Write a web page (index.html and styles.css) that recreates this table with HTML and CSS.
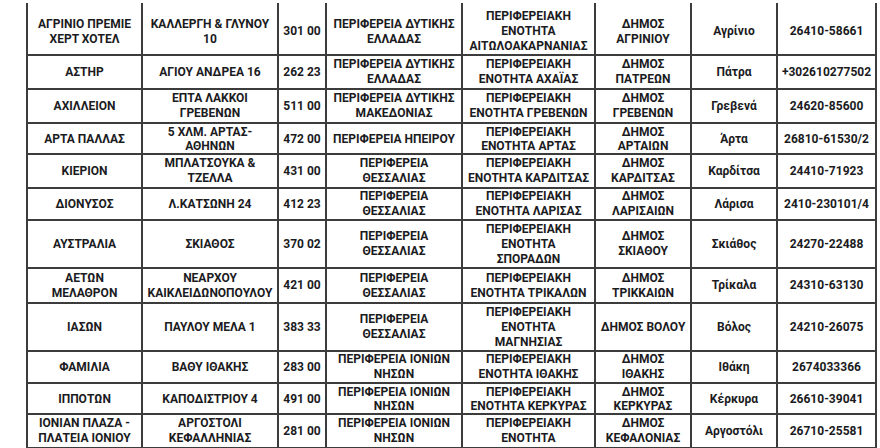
FILE: index.html
```html
<!DOCTYPE html>
<html lang="el">
<head>
<meta charset="utf-8">
<title>Ξενοδοχεία</title>
<link rel="stylesheet" href="styles.css">
</head>
<body>
<div class="sheet">
<table class="hotels">
<colgroup>
<col class="c-name"><col class="c-addr"><col class="c-zip"><col class="c-region"><col class="c-unit"><col class="c-muni"><col class="c-city"><col class="c-phone">
</colgroup>
<tbody>
<tr class="r-first">
<td>ΑΓΡΙΝΙΟ ΠΡΕΜΙΕ<br>ΧΕΡΤ ΧΟΤΕΛ</td><td>ΚΑΛΛΕΡΓΗ &amp; ΓΛΥΝΟΥ<br>10</td><td>301 00</td><td>ΠΕΡΙΦΕΡΕΙΑ ΔΥΤΙΚΗΣ<br>ΕΛΛΑΔΑΣ</td><td>ΠΕΡΙΦΕΡΕΙΑΚΗ<br>ΕΝΟΤΗΤΑ<br>ΑΙΤΩΛΟΑΚΑΡΝΑΝΙΑΣ</td><td>ΔΗΜΟΣ<br>ΑΓΡΙΝΙΟΥ</td><td>Αγρίνιο</td><td>26410-58661</td>
</tr>
<tr class="r34">
<td>ΑΣΤΗΡ</td><td>ΑΓΙΟΥ ΑΝΔΡΕΑ 16</td><td>262 23</td><td>ΠΕΡΙΦΕΡΕΙΑ ΔΥΤΙΚΗΣ<br>ΕΛΛΑΔΑΣ</td><td>ΠΕΡΙΦΕΡΕΙΑΚΗ<br>ΕΝΟΤΗΤΑ ΑΧΑΪΑΣ</td><td>ΔΗΜΟΣ<br>ΠΑΤΡΕΩΝ</td><td>Πάτρα</td><td>+302610277502</td>
</tr>
<tr class="r34">
<td>ΑΧΙΛΛΕΙΟΝ</td><td>ΕΠΤΑ ΛΑΚΚΟΙ<br>ΓΡΕΒΕΝΩΝ</td><td>511 00</td><td>ΠΕΡΙΦΕΡΕΙΑ ΔΥΤΙΚΗΣ<br>ΜΑΚΕΔΟΝΙΑΣ</td><td>ΠΕΡΙΦΕΡΕΙΑΚΗ<br>ΕΝΟΤΗΤΑ ΓΡΕΒΕΝΩΝ</td><td>ΔΗΜΟΣ<br>ΓΡΕΒΕΝΩΝ</td><td>Γρεβενά</td><td>24620-85600</td>
</tr>
<tr class="r31">
<td>ΑΡΤΑ ΠΑΛΛΑΣ</td><td>5 ΧΛΜ. ΑΡΤΑΣ-<br>ΑΘΗΝΩΝ</td><td>472 00</td><td>ΠΕΡΙΦΕΡΕΙΑ ΗΠΕΙΡΟΥ</td><td>ΠΕΡΙΦΕΡΕΙΑΚΗ<br>ΕΝΟΤΗΤΑ ΑΡΤΑΣ</td><td>ΔΗΜΟΣ<br>ΑΡΤΑΙΩΝ</td><td>Άρτα</td><td>26810-61530/2</td>
</tr>
<tr class="r34">
<td>ΚΙΕΡΙΟΝ</td><td>ΜΠΛΑΤΣΟΥΚΑ &amp;<br>ΤΖΕΛΛΑ</td><td>431 00</td><td>ΠΕΡΙΦΕΡΕΙΑ<br>ΘΕΣΣΑΛΙΑΣ</td><td>ΠΕΡΙΦΕΡΕΙΑΚΗ<br>ΕΝΟΤΗΤΑ ΚΑΡΔΙΤΣΑΣ</td><td>ΔΗΜΟΣ<br>ΚΑΡΔΙΤΣΑΣ</td><td>Καρδίτσα</td><td>24410-71923</td>
</tr>
<tr class="r32">
<td>ΔΙΟΝΥΣΟΣ</td><td>Λ.ΚΑΤΣΩΝΗ 24</td><td>412 23</td><td>ΠΕΡΙΦΕΡΕΙΑ<br>ΘΕΣΣΑΛΙΑΣ</td><td>ΠΕΡΙΦΕΡΕΙΑΚΗ<br>ΕΝΟΤΗΤΑ ΛΑΡΙΣΑΣ</td><td>ΔΗΜΟΣ<br>ΛΑΡΙΣΑΙΩΝ</td><td>Λάρισα</td><td>2410-230101/4</td>
</tr>
<tr class="r48">
<td>ΑΥΣΤΡΑΛΙΑ</td><td>ΣΚΙΑΘΟΣ</td><td>370 02</td><td>ΠΕΡΙΦΕΡΕΙΑ<br>ΘΕΣΣΑΛΙΑΣ</td><td>ΠΕΡΙΦΕΡΕΙΑΚΗ<br>ΕΝΟΤΗΤΑ<br>ΣΠΟΡΑΔΩΝ</td><td>ΔΗΜΟΣ<br>ΣΚΙΑΘΟΥ</td><td>Σκιάθος</td><td>24270-22488</td>
</tr>
<tr class="r35">
<td>ΑΕΤΩΝ<br>ΜΕΛΑΘΡΟΝ</td><td>ΝΕΑΡΧΟΥ<br>ΚΑΙΚΛΕΙΔΩΝΟΠΟΥΛΟΥ</td><td>421 00</td><td>ΠΕΡΙΦΕΡΕΙΑ<br>ΘΕΣΣΑΛΙΑΣ</td><td>ΠΕΡΙΦΕΡΕΙΑΚΗ<br>ΕΝΟΤΗΤΑ ΤΡΙΚΑΛΩΝ</td><td>ΔΗΜΟΣ<br>ΤΡΙΚΚΑΙΩΝ</td><td>Τρίκαλα</td><td>24310-63130</td>
</tr>
<tr class="r48">
<td>ΙΑΣΩΝ</td><td>ΠΑΥΛΟΥ ΜΕΛΑ 1</td><td>383 33</td><td>ΠΕΡΙΦΕΡΕΙΑ<br>ΘΕΣΣΑΛΙΑΣ</td><td>ΠΕΡΙΦΕΡΕΙΑΚΗ<br>ΕΝΟΤΗΤΑ<br>ΜΑΓΝΗΣΙΑΣ</td><td>ΔΗΜΟΣ ΒΟΛΟΥ</td><td>Βόλος</td><td>24210-26075</td>
</tr>
<tr class="r32">
<td>ΦΑΜΙΛΙΑ</td><td>ΒΑΘΥ ΙΘΑΚΗΣ</td><td>283 00</td><td>ΠΕΡΙΦΕΡΕΙΑ ΙΟΝΙΩΝ<br>ΝΗΣΩΝ</td><td>ΠΕΡΙΦΕΡΕΙΑΚΗ<br>ΕΝΟΤΗΤΑ ΙΘΑΚΗΣ</td><td>ΔΗΜΟΣ<br>ΙΘΑΚΗΣ</td><td>Ιθάκη</td><td>2674033366</td>
</tr>
<tr class="r31">
<td>ΙΠΠΟΤΩΝ</td><td>ΚΑΠΟΔΙΣΤΡΙΟΥ 4</td><td>491 00</td><td>ΠΕΡΙΦΕΡΕΙΑ ΙΟΝΙΩΝ<br>ΝΗΣΩΝ</td><td>ΠΕΡΙΦΕΡΕΙΑΚΗ<br>ΕΝΟΤΗΤΑ ΚΕΡΚΥΡΑΣ</td><td>ΔΗΜΟΣ<br>ΚΕΡΚΥΡΑΣ</td><td>Κέρκυρα</td><td>26610-39041</td>
</tr>
<tr class="r34">
<td>ΙΟΝΙΑΝ ΠΛΑΖΑ -<br>ΠΛΑΤΕΙΑ ΙΟΝΙΟΥ</td><td>ΑΡΓΟΣΤΟΛΙ<br>ΚΕΦΑΛΛΗΝΙΑΣ</td><td>281 00</td><td>ΠΕΡΙΦΕΡΕΙΑ ΙΟΝΙΩΝ<br>ΝΗΣΩΝ</td><td>ΠΕΡΙΦΕΡΕΙΑΚΗ<br>ΕΝΟΤΗΤΑ</td><td>ΔΗΜΟΣ<br>ΚΕΦΑΛΟΝΙΑΣ</td><td>Αργοστόλι</td><td>26710-25581</td>
</tr>
</tbody>
</table>
</div>
</body>
</html>
```

FILE: styles.css
```css
html, body {
  margin: 0;
  padding: 0;
  background: #ffffff;
}

.sheet {
  padding: 3px 0 0 26px;
}

.hotels {
  border-collapse: collapse;
  table-layout: fixed;
  width: 851px;
  font-family: Roboto, "Noto Sans", sans-serif;
  font-weight: 700;
  font-size: 12px;
  line-height: 15px;
  color: #1b1b22;
}

.c-name { width: 115px; }
.c-addr { width: 136px; }
.c-zip { width: 48px; }
.c-region { width: 136px; }
.c-unit { width: 133px; }
.c-muni { width: 96px; }
.c-city { width: 86px; }
.c-phone { width: 99px; }

.hotels td {
  border: 2px solid #3c3c3c;
  padding: 0;
  text-align: center;
  vertical-align: middle;
  white-space: nowrap;
  overflow: hidden;
}

.r-first td {
  border-top: none;
  height: 43px;
  padding-top: 6px;
}

.r31 td { height: 29px; line-height: 14px; }
.r32 td { height: 30px; }
.r34 td { height: 32px; }
.r35 td { height: 33px; }
.r48 td { height: 46px; }
```
